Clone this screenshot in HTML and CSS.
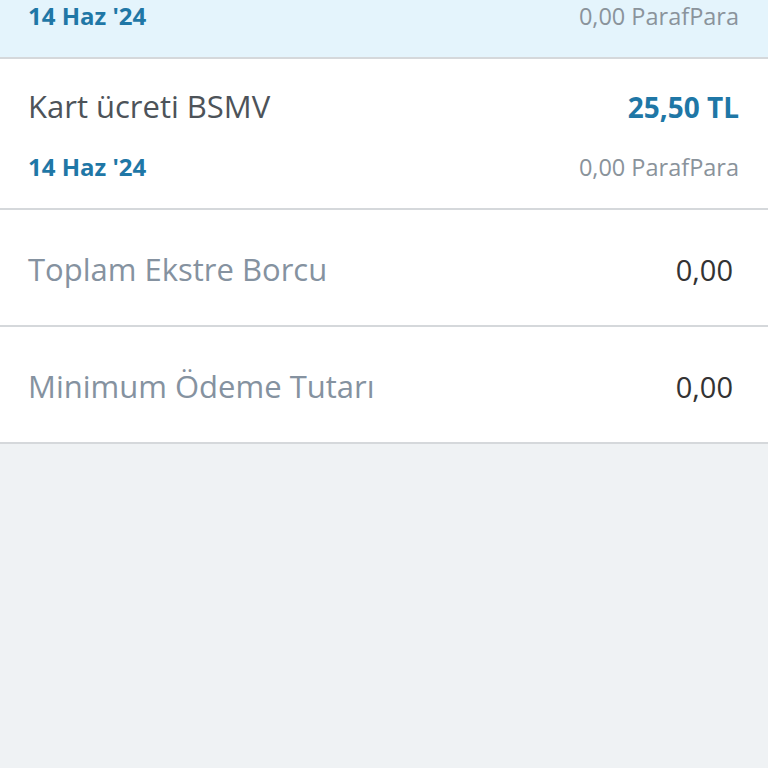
FILE: index.html
```html
<!DOCTYPE html>
<html lang="tr">
<head>
<meta charset="utf-8">
<link rel="stylesheet" href="styles.css">
</head>
<body>
<div class="page">
  <div class="card card--active card--cut">
    <div class="line line--meta">
      <span class="date">14 Haz '24</span>
      <span class="points">0,00 ParafPara</span>
    </div>
  </div>
  <div class="card">
    <div class="line line--main">
      <span class="title">Kart ücreti BSMV</span>
      <span class="amount">25,50 TL</span>
    </div>
    <div class="line line--meta">
      <span class="date">14 Haz '24</span>
      <span class="points">0,00 ParafPara</span>
    </div>
  </div>
  <div class="summary">
    <span class="summary__label">Toplam Ekstre Borcu</span>
    <span class="summary__value">0,00</span>
  </div>
  <div class="summary">
    <span class="summary__label">Minimum Ödeme Tutarı</span>
    <span class="summary__value">0,00</span>
  </div>
</div>
</body>
</html>
```
FILE: styles.css
```css
html, body {
  margin: 0;
  padding: 0;
  background: #eff2f4;
}
body {
  font-family: "Open Sans", "Noto Sans", sans-serif;
}
.page {
  display: flex;
  flex-direction: column;
}
.card {
  background: #ffffff;
  padding: 27px 29px 25px 28px;
  display: flex;
  flex-direction: column;
  gap: 24px;
  border-bottom: 2px solid #d5d8db;
}
.card--active {
  background: #e4f4fc;
}
.card--cut {
  padding-top: 0;
}
.line {
  display: flex;
  justify-content: space-between;
  align-items: baseline;
}
.line--main {
  line-height: 40px;
}
.line--meta {
  line-height: 32px;
}
.title {
  font-size: 31px;
  color: #4d5359;
}
.amount {
  font-size: 28px;
  font-weight: 700;
  color: #1f77a6;
}
.date {
  font-size: 24px;
  font-weight: 700;
  color: #1f77a6;
}
.points {
  font-size: 23.5px;
  color: #8a939b;
}
.summary {
  background: #ffffff;
  display: flex;
  justify-content: space-between;
  align-items: baseline;
  padding: 39px 35px 35px 28px;
  line-height: 40px;
  border-bottom: 2px solid #d5d8db;
}
.summary__label {
  font-size: 31px;
  color: #8592a0;
}
.summary__value {
  font-size: 29px;
  color: #333333;
}
```
